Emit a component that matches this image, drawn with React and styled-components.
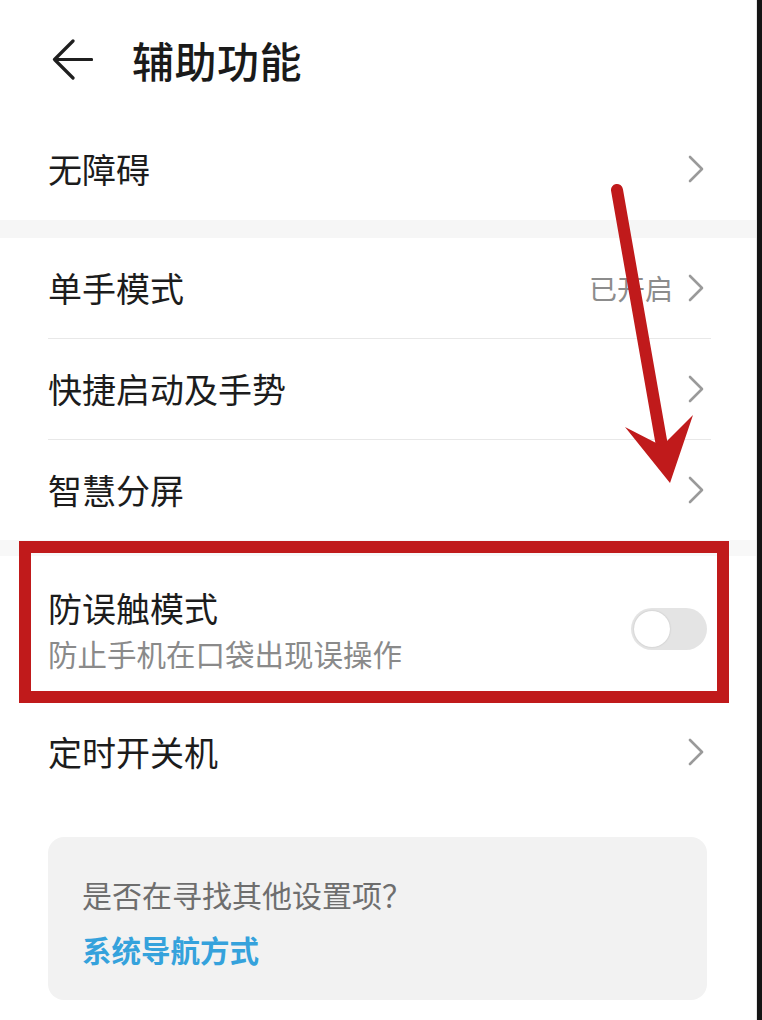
import React from 'react';
import styled, { createGlobalStyle } from 'styled-components';

const GlobalStyle = createGlobalStyle`
  html, body {
    margin: 0;
    padding: 0;
    background: #ffffff;
  }
  body {
    font-family: "Noto Sans CJK SC", "Noto Sans", sans-serif;
    color: #1c1c1c;
  }
`;

const Frame = styled.div`
  display: flex;
  width: 762px;
  min-height: 1020px;
`;

const Screen = styled.div`
  position: relative;
  width: 757px;
  min-height: 1020px;
  box-sizing: border-box;
  border-right: 1px solid #e6e6e6;
  background: #ffffff;
  overflow: hidden;
`;

const Edge = styled.div`
  width: 5px;
  background: #141414;
`;

const Header = styled.div`
  display: flex;
  align-items: center;
  gap: 39px;
  height: 118px;
  padding-left: 52px;
`;

const Title = styled.h1`
  margin: 0;
  font-size: 42px;
  font-weight: 500;
  letter-spacing: 0.5px;
  color: #1a1a1a;
`;

const Band = styled.div`
  height: ${(p) => p.$h || 18}px;
  background: ${(p) => p.$tone || '#f6f6f6'};
`;

const Row = styled.div`
  display: flex;
  align-items: center;
  justify-content: space-between;
  height: ${(p) => p.$h || 100}px;
  padding: 0 45px 0 48px;
  box-sizing: border-box;
`;

const Texts = styled.div`
  display: flex;
  flex-direction: column;
  gap: 3px;
`;

const Label = styled.div`
  font-size: 34px;
  line-height: 44px;
  color: #1c1c1c;
`;

const Sub = styled.div`
  font-size: 29.5px;
  line-height: 40px;
  color: #8a8a8a;
`;

const Right = styled.div`
  display: flex;
  align-items: center;
  gap: 14px;
`;

const Status = styled.span`
  font-size: 28px;
  color: #8c8c8c;
`;

const Divider = styled.div`
  height: 1px;
  margin: 0 45px 0 48px;
  background: #e8e8e8;
`;

const Toggle = styled.div`
  position: relative;
  width: 76px;
  height: 42px;
  margin-right: 4px;
  border-radius: 21px;
  background: #e4e4e4;
`;

const Knob = styled.div`
  position: absolute;
  top: 3px;
  left: 3px;
  width: 36px;
  height: 36px;
  border-radius: 50%;
  background: #ffffff;
  box-shadow: 0 0 2px rgba(0, 0, 0, 0.18);
`;

const Card = styled.div`
  margin: 35px 49px 0 48px;
  padding: 37px 34px 30px;
  height: 163px;
  box-sizing: border-box;
  border-radius: 16px;
  background: #f2f2f2;
  display: flex;
  flex-direction: column;
  gap: 15px;
`;

const Hint = styled.div`
  font-size: 30px;
  line-height: 40px;
  color: #6e6e6e;
`;

const Link = styled.div`
  font-size: 29.5px;
  line-height: 40px;
  font-weight: 700;
  color: #35a2dc;
`;

const Highlight = styled.div`
  position: absolute;
  left: 19px;
  top: 541px;
  width: 710px;
  height: 162px;
  box-sizing: border-box;
  border: 12px solid #c01a1b;
  pointer-events: none;
`;

const Overlay = styled.svg`
  position: absolute;
  left: 0;
  top: 0;
  pointer-events: none;
`;

const Chevron = () => (
  <svg width="24" height="28" viewBox="0 0 24 28">
    <path d="M3 2 L15 14 L3 26" fill="none" stroke="#9a9a9a" strokeWidth="2.6" strokeLinecap="round" strokeLinejoin="round" />
  </svg>
);

const BackArrow = () => (
  <svg width="41" height="41" viewBox="0 0 41 41">
    <path d="M2.5 20.5 H39.5 M21 2 L2.5 20.5 L21 39" fill="none" stroke="#1f1f1f" strokeWidth="3.2" strokeLinecap="round" strokeLinejoin="round" />
  </svg>
);

const App = () => (
  <>
    <GlobalStyle />
    <Frame>
      <Screen>
        <Header>
          <BackArrow />
          <Title>辅助功能</Title>
        </Header>

        <Row $h={102}>
          <Label>无障碍</Label>
          <Chevron />
        </Row>
        <Band />

        <Row>
          <Label>单手模式</Label>
          <Right>
            <Status>已开启</Status>
            <Chevron />
          </Right>
        </Row>
        <Divider />
        <Row>
          <Label>快捷启动及手势</Label>
          <Chevron />
        </Row>
        <Divider />
        <Row>
          <Label>智慧分屏</Label>
          <Chevron />
        </Row>
        <Band $h={16} $tone="#f8f8f8" />

        <Row $h={146}>
          <Texts>
            <Label>防误触模式</Label>
            <Sub>防止手机在口袋出现误操作</Sub>
          </Texts>
          <Toggle>
            <Knob />
          </Toggle>
        </Row>

        <Row>
          <Label>定时开关机</Label>
          <Chevron />
        </Row>

        <Card>
          <Hint>是否在寻找其他设置项？</Hint>
          <Link>系统导航方式</Link>
        </Card>

        <Highlight />
        <Overlay width="757" height="1020" viewBox="0 0 757 1020">
          <line x1="617" y1="190" x2="662" y2="446" stroke="#c01a1b" strokeWidth="12" strokeLinecap="round" />
          <polygon points="625,427 662,446 693,415 670,483" fill="#c01a1b" />
        </Overlay>
      </Screen>
      <Edge />
    </Frame>
  </>
);

export default App;
